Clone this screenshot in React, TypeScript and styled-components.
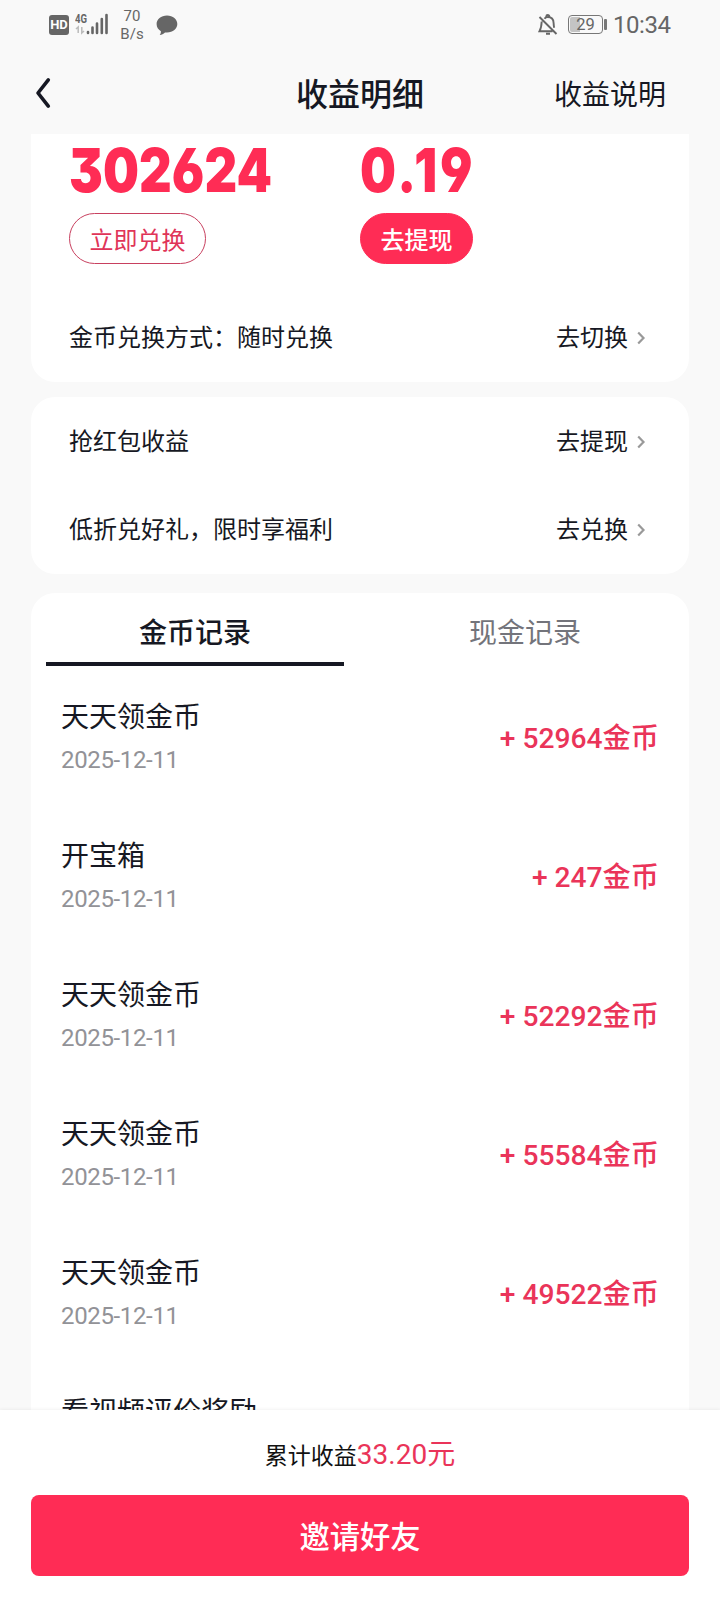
import React from 'react';
import styled, { createGlobalStyle } from 'styled-components';

const RED = '#ff2c55';
const INK = '#161823';

const GlobalStyle = createGlobalStyle`
  * { box-sizing: border-box; }
  body { margin: 0; background: #f9f9f9; }
  button { font: inherit; border: 0; background: none; padding: 0; }
`;

const Screen = styled.div`
  display: flex;
  flex-direction: column;
  width: 720px;
  height: 1600px;
  overflow: hidden;
  background: #f9f9f9;
  color: ${INK};
  font-family: Roboto, 'Noto Sans CJK SC', sans-serif;
  white-space: nowrap;
`;

const StatusBar = styled.div`
  display: flex;
  justify-content: space-between;
  height: 50px;
  padding: 0 49px;
  color: #666;
`;

const StatusGroup = styled.div`
  display: flex;
  align-items: center;
  height: 48px;
`;

const HdBadge = styled.span`
  width: 20px;
  height: 20px;
  margin-top: 1px;
  border-radius: 3px;
  background: #666;
  color: #fff;
  font: 700 13px/20px Roboto, sans-serif;
  text-align: center;
`;

const Speed = styled.div`
  width: 24px;
  margin-left: 11px;
  margin-top: 2px;
  font-size: 15px;
  line-height: 18px;
  text-align: center;
`;

const Battery = styled.div`
  width: 35px;
  height: 19px;
  margin-left: 10px;
  border: 1.5px solid #777;
  border-radius: 4px;
  background: linear-gradient(to right, #c4c4c4 10px, transparent 10px);
  background-origin: content-box;
  background-clip: content-box;
  padding: 1px;
  font-size: 16.5px;
  line-height: 15px;
  text-align: center;
`;

const BatteryTip = styled.span`
  width: 3px;
  height: 11px;
  margin-left: 1px;
  border-radius: 1px;
  background: #777;
`;

const Clock = styled.span`
  margin-left: 6px;
  margin-right: 1px;
  margin-top: 2px;
  font-size: 24px;
  line-height: 28px;
  width: 57px;
  letter-spacing: -0.45px;
`;

const NavBar = styled.header`
  display: grid;
  grid-template-columns: 1fr auto 1fr;
  align-items: center;
  height: 84px;
  padding: 4px 54px 0 35px;
`;

const BackButton = styled.button`
  display: flex;
  width: 18px;
  margin-top: -2px;
`;

const PageTitle = styled.h1`
  margin: 2px -19px 0 0;
  font-size: 32px;
  font-weight: 500;
  line-height: 44px;
`;

const HelpLink = styled.a`
  justify-self: end;
  margin-top: 4px;
  font-size: 28px;
  line-height: 40px;
`;

const Content = styled.main`
  flex: none;
  height: 1276px;
  padding: 0 31px;
  overflow: hidden;
`;

const Card = styled.section<{ $gap?: number; $inset?: number; $clipped?: boolean }>`
  margin-top: ${(p) => p.$gap ?? 0}px;
  padding-top: ${(p) => p.$inset ?? 0}px;
  border-radius: ${(p) => (p.$clipped ? '0 0 24px 24px' : '24px')};
  background: #fff;
`;

const Balances = styled.div`
  display: flex;
  height: 160px;
  padding: 0 38px;
`;

const Balance = styled.div<{ $width: number }>`
  display: flex;
  flex-direction: column;
  align-items: flex-start;
  width: ${(p) => p.$width}px;
`;

const BalanceValue = styled.strong<{ $spacing: number }>`
  height: 72px;
  margin-bottom: 7px;
  color: ${RED};
  font: 900 61px/72px Inter, sans-serif;
  font-feature-settings: 'cv09', 'cv03', 'cv04';
  letter-spacing: ${(p) => p.$spacing}px;
  transform: scaleX(0.83);
  transform-origin: left;
`;

const Pill = styled.button<{ $solid?: boolean }>`
  height: 51px;
  padding: 6px 19.5px 0;
  border: 1px solid ${(p) => (p.$solid ? RED : '#c8405f')};
  border-radius: 26px;
  background: ${(p) => (p.$solid ? RED : '#fff')};
  color: ${(p) => (p.$solid ? '#fff' : '#e03558')};
  font-size: 24px;
  font-weight: ${(p) => (p.$solid ? 500 : 400)};
  line-height: 43px;
`;

const MenuRow = styled.div`
  display: flex;
  justify-content: space-between;
  align-items: center;
  height: 88px;
  padding: 0 43px 0 38px;
  font-size: 24px;
  line-height: 36px;
`;

const MenuAction = styled.span`
  display: flex;
  align-items: center;
  gap: 9px;
`;

const Tabs = styled.div`
  display: flex;
  gap: 32px;
  padding: 0 15px;
`;

const Tab = styled.button<{ $active?: boolean }>`
  width: 298px;
  height: 73px;
  padding-top: 13px;
  border-bottom: 4px solid ${(p) => (p.$active ? INK : 'transparent')};
  color: ${(p) => (p.$active ? INK : '#73747b')};
  font-size: 28px;
  font-weight: ${(p) => (p.$active ? 500 : 400)};
  line-height: 56px;
`;

const RecordRow = styled.div`
  display: flex;
  justify-content: space-between;
  align-items: center;
  height: 139px;
  padding: 0 30px;
`;

const RecordTitle = styled.div`
  padding-top: 5px;
  font-size: 28px;
  line-height: 43px;
`;

const RecordDate = styled.div`
  color: #929297;
  font-size: 24px;
  line-height: 42px;
  letter-spacing: -0.35px;
`;

const Amount = styled.span`
  padding-bottom: 1px;
  color: #ea3459;
  font-size: 28.2px;
  font-weight: 500;
`;

const Footer = styled.footer`
  flex: 1;
  padding: 20px 31px 0;
  background: #fff;
  box-shadow: 0 -1px 3px rgba(0, 0, 0, 0.05);
`;

const Total = styled.div`
  height: 65px;
  color: #111;
  font-size: 23px;
  line-height: 50px;
  text-align: center;
`;

const TotalValue = styled.span`
  color: #ea3459;
  font-size: 28px;
`;

const InviteButton = styled.button`
  width: 100%;
  height: 81px;
  padding-top: 4px;
  border-radius: 8px;
  background: ${RED};
  color: #fff;
  font-size: 30.3px;
  font-weight: 500;
  line-height: 77px;
`;

const SignalIcon = () => (
  <svg width="34" height="24" viewBox="0 0 34 24" style={{ marginLeft: 6 }}>
    <text x="0" y="11" fontFamily="Roboto" fontWeight="700" fontSize="12" textLength="12" lengthAdjust="spacingAndGlyphs" fill="#666">4G</text>
    <path d="M3.2 21v-6L1 17M6.8 15v6l2.2-2" fill="none" stroke="#bbb" strokeWidth="1.5" />
    <path d="M13 20v1M17.5 15.5V21M22 11.5V21M26.8 7V21M31.5 3V21" stroke="#666" strokeWidth="2.6" strokeLinecap="round" />
  </svg>
);

const ChatIcon = () => (
  <svg width="22" height="21" viewBox="0 0 22 21" style={{ marginLeft: 12, marginTop: 2 }}>
    <path d="M11 .5C17 .5 21.3 4.2 21.3 9S17 17.5 11 17.5l-2-.1c-1.5 1.400-3.200 2.400-5.300 2.600.8-1 1.200-2.100 1.200-3.800C2.200 14.700.6 12 .6 9 .6 4.200 5 .5 11 .5Z" fill="#666" />
  </svg>
);

const MutedBellIcon = () => (
  <svg width="20" height="22" viewBox="0 0 20 22" fill="none" stroke="#666" strokeWidth="1.9" style={{ marginTop: 1 }}>
    <path d="M1.5 3 18.5 20M3.7 7.5C3.5 12 3.3 14 1.5 17.2H14.5M6.5 4.800C7.300 3.500 8.400 3 9.700 3c3.800 0 5.800 2.500 5.900 6 .1 2 .2 3.400.6 4.800M8.300 2.500a1.500 1.500 0 0 1 3 0M8 19.800h4" />
  </svg>
);

const ChevronRight = () => (
  <svg width="9" height="14" viewBox="0 0 9 14" fill="none" stroke="#999" strokeWidth="2.2">
    <path d="m1.200 1.500 5.300 5.500-5.300 5.500" />
  </svg>
);

const menuItems = [
  { label: '抢红包收益', action: '去提现' },
  { label: '低折兑好礼，限时享福利', action: '去兑换' },
];

const records = [
  { title: '天天领金币', date: '2025-12-11', amount: '52964' },
  { title: '开宝箱', date: '2025-12-11', amount: '247' },
  { title: '天天领金币', date: '2025-12-11', amount: '52292' },
  { title: '天天领金币', date: '2025-12-11', amount: '55584' },
  { title: '天天领金币', date: '2025-12-11', amount: '49522' },
  { title: '看视频评价奖励', date: '', amount: '' },
];

const MenuItem = ({ label, action }: { label: string; action: string }) => (
  <MenuRow>
    <span>{label}</span>
    <MenuAction>
      <span>{action}</span>
      <ChevronRight />
    </MenuAction>
  </MenuRow>
);

export default function App() {
  return (
    <>
      <GlobalStyle />
      <Screen>
        <StatusBar>
          <StatusGroup>
            <HdBadge>HD</HdBadge>
            <SignalIcon />
            <Speed>
              70
              <br />
              B/s
            </Speed>
            <ChatIcon />
          </StatusGroup>
          <StatusGroup>
            <MutedBellIcon />
            <Battery>29</Battery>
            <BatteryTip />
            <Clock>10:34</Clock>
          </StatusGroup>
        </StatusBar>
        <NavBar>
          <BackButton aria-label="返回">
            <svg width="18" height="32" viewBox="0 0 18 32" fill="none" stroke={INK} strokeWidth="3.6" strokeLinecap="round" strokeLinejoin="round">
              <path d="M13.3 2.8 3 16l10.3 13.2" />
            </svg>
          </BackButton>
          <PageTitle>收益明细</PageTitle>
          <HelpLink>收益说明</HelpLink>
        </NavBar>
        <Content>
          <Card $clipped>
            <Balances>
              <Balance $width={291}>
                <BalanceValue $spacing={0.1}>302624</BalanceValue>
                <Pill>立即兑换</Pill>
              </Balance>
              <Balance $width={200}>
                <BalanceValue $spacing={3.5}>0.19</BalanceValue>
                <Pill $solid>去提现</Pill>
              </Balance>
            </Balances>
            <MenuItem label="金币兑换方式：随时兑换" action="去切换" />
          </Card>
          <Card $gap={15} $inset={1}>
            {menuItems.map((item) => (
              <MenuItem key={item.label} {...item} />
            ))}
          </Card>
          <Card $gap={19}>
            <Tabs>
              <Tab $active>金币记录</Tab>
              <Tab>现金记录</Tab>
            </Tabs>
            {records.map((record, index) => (
              <RecordRow key={index}>
                <div>
                  <RecordTitle>{record.title}</RecordTitle>
                  <RecordDate>{record.date || '\u00a0'}</RecordDate>
                </div>
                {record.amount && <Amount>+ {record.amount}金币</Amount>}
              </RecordRow>
            ))}
          </Card>
        </Content>
        <Footer>
          <Total>
            累计收益<TotalValue>33.20元</TotalValue>
          </Total>
          <InviteButton>邀请好友</InviteButton>
        </Footer>
      </Screen>
    </>
  );
}
